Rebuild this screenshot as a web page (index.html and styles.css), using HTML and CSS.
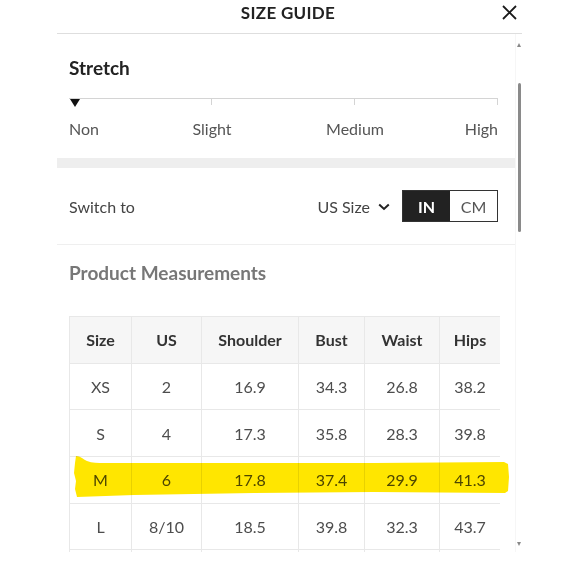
FILE: index.html
```html
<!DOCTYPE html>
<html lang="en">
<head>
<meta charset="utf-8">
<title>Size Guide</title>
<link rel="stylesheet" href="styles.css">
</head>
<body>
<div class="sheet">
  <header class="header">
    <span></span>
    <h1 class="title">SIZE GUIDE</h1>
    <button class="close" aria-label="Close">
      <svg width="15" height="15" viewBox="0 0 15 15"><path d="M1 1 L14 14 M14 1 L1 14" stroke="#1a1a1a" stroke-width="1.8" fill="none"/></svg>
    </button>
  </header>
  <div class="body">
    <div class="content">
      <section class="stretch">
        <h2 class="stretch-title">Stretch</h2>
        <div class="track">
          <span><i class="marker"></i></span>
          <span></span>
          <span></span>
        </div>
        <div class="labels">
          <span class="l-non">Non</span>
          <span class="l-slight">Slight</span>
          <span class="l-medium">Medium</span>
          <span class="l-high">High</span>
        </div>
      </section>
      <div class="band"></div>
      <div class="switch">
        <span class="switch-label">Switch to</span>
        <div class="switch-right">
          <span class="region">US Size</span>
          <svg class="chev" width="12" height="8" viewBox="0 0 12 8"><path d="M1.2 1.5 L6 6 L10.8 1.5" stroke="#222" stroke-width="2" fill="none"/></svg>
          <div class="toggle">
            <span class="opt on">IN</span>
            <span class="opt">CM</span>
          </div>
        </div>
      </div>
      <section class="measure">
        <h3 class="measure-title">Product Measurements</h3>
        <div class="table-wrap">
          <table class="sizes">
            <colgroup>
              <col class="c1"><col class="c2"><col class="c3"><col class="c4"><col class="c5"><col class="c6">
            </colgroup>
            <thead>
              <tr><th>Size</th><th>US</th><th>Shoulder</th><th>Bust</th><th>Waist</th><th>Hips</th></tr>
            </thead>
            <tbody>
              <tr><td>XS</td><td>2</td><td>16.9</td><td>34.3</td><td>26.8</td><td>38.2</td></tr>
              <tr><td>S</td><td>4</td><td>17.3</td><td>35.8</td><td>28.3</td><td>39.8</td></tr>
              <tr><td>M</td><td>6</td><td>17.8</td><td>37.4</td><td>29.9</td><td>41.3</td></tr>
              <tr><td>L</td><td>8/10</td><td>18.5</td><td>39.8</td><td>32.3</td><td>43.7</td></tr>
              <tr class="next"><td></td><td></td><td></td><td></td><td></td><td></td></tr>
            </tbody>
          </table>
        </div>
      </section>
      <svg class="highlight" width="436" height="44" viewBox="0 0 436 44">
        <path d="M2 1 C6 1 9 4 13 6 C18 8 24 8 30 8 L180 8 L300 8 L430 7 L434 9 L435 22 L434 36 L431 38 L300 37 L180 38 L60 40 L3 42 L1 34 L2 26 L0 18 L1 8 Z" fill="#ffe600"/>
      </svg>
    </div>
    <div class="scroll">
      <i class="arrow up"></i>
      <i class="thumb"></i>
      <i class="fill"></i>
      <i class="arrow down"></i>
    </div>
  </div>
</div>
</body>
</html>
```
FILE: styles.css
```css
* { box-sizing: border-box; }
html, body { margin: 0; padding: 0; background: #fff; }
body { font-family: Lato, "Open Sans", sans-serif; color: #555; }

.sheet { margin-left: 57px; width: 465px; }

.header {
  display: grid;
  grid-template-columns: 1fr auto 1fr;
  align-items: start;
  height: 34px;
  padding-top: 3px;
  border-bottom: 1px solid #dedede;
}
.title {
  margin: 0 3px 0 0;
  font-size: 17px;
  line-height: 20px;
  font-weight: 700;
  color: #222;
  letter-spacing: 0.3px;
}
.close {
  justify-self: end;
  margin: 2px 5px 0 0;
  padding: 0;
  border: 0;
  background: none;
  width: 15px;
  height: 15px;
  display: block;
}
.close svg { display: block; }

.body { display: flex; height: 518px; }
.content { width: 458px; overflow: hidden; position: relative; }

.stretch { padding: 24px 17px 19px 12px; }
.stretch-title {
  margin: 0;
  font-size: 19px;
  line-height: 20px;
  font-weight: 700;
  color: #222;
}
.track {
  margin-top: 20px;
  display: grid;
  grid-template-columns: repeat(3, 1fr);
  border-top: 1px solid #d4d4d4;
}
.track span { height: 6px; border-right: 1px solid #d4d4d4; }
.marker {
  display: block;
  width: 0; height: 0;
  margin-left: 1px;
  border-left: 5px solid transparent;
  border-right: 5px solid transparent;
  border-top: 8px solid #111;
}
.labels {
  margin-top: 14px;
  display: grid;
  grid-template-columns: repeat(6, 1fr);
  font-size: 16px;
  line-height: 20px;
  color: #555;
}
.l-non { grid-column: 1; }
.l-slight { grid-column: 2 / span 2; text-align: center; }
.l-medium { grid-column: 4 / span 2; text-align: center; }
.l-high { grid-column: 6; text-align: right; }

.band { height: 10px; background: #eeeeee; }

.switch {
  height: 77px;
  padding: 0 17px 0 12px;
  display: flex;
  align-items: center;
  justify-content: space-between;
  border-bottom: 1px solid #efefef;
  font-size: 16px;
  color: #444;
}
.switch-right { display: flex; align-items: center; }
.region { color: #444; }
.chev { display: block; margin: 1px 12px 0 8px; }
.toggle {
  display: flex;
  height: 32px;
  border: 1px solid #333;
}
.opt {
  display: flex;
  align-items: center;
  justify-content: center;
  width: 47px;
  color: #555;
}
.opt.on { background: #222; color: #fff; font-weight: 700; }

.measure { padding: 18px 0 0 12px; }
.measure-title {
  margin: 0;
  font-size: 19px;
  line-height: 20px;
  font-weight: 700;
  color: #777;
}
.table-wrap { margin-top: 33px; width: 431px; }
.sizes {
  width: 431px;
  table-layout: fixed;
  border-collapse: separate;
  border-spacing: 0;
  font-size: 16px;
  color: #4d4d4d;
  text-align: center;
}
.c1 { width: 62px; } .c2 { width: 70px; } .c3 { width: 97px; }
.c4 { width: 66px; } .c5 { width: 75px; } .c6 { width: 61px; }
.sizes th, .sizes td {
  height: 46.67px;
  padding: 0;
  border-top: 1px solid #e8e8e8;
  border-left: 1px solid #e8e8e8;
  vertical-align: middle;
}
.sizes th {
  background: #f6f6f6;
  font-weight: 700;
  font-size: 16px;
  color: #333;
}

.highlight {
  position: absolute;
  left: 17px;
  top: 421px;
  mix-blend-mode: multiply;
}

.scroll {
  width: 7px;
  display: flex;
  flex-direction: column;
  align-items: center;
  border-left: 1px solid #f6f6f6;
}
.arrow { display: block; width: 0; height: 0; border-left: 2px solid transparent; border-right: 2px solid transparent; }
.arrow.up { margin-top: 9px; border-bottom: 4px solid #888; }
.arrow.down { margin-bottom: 6px; border-top: 4px solid #888; }
.thumb { display: block; width: 3px; height: 149px; margin-top: 36px; background: #8a8a8a; border-radius: 2px; }
.fill { flex: 1; }
```
